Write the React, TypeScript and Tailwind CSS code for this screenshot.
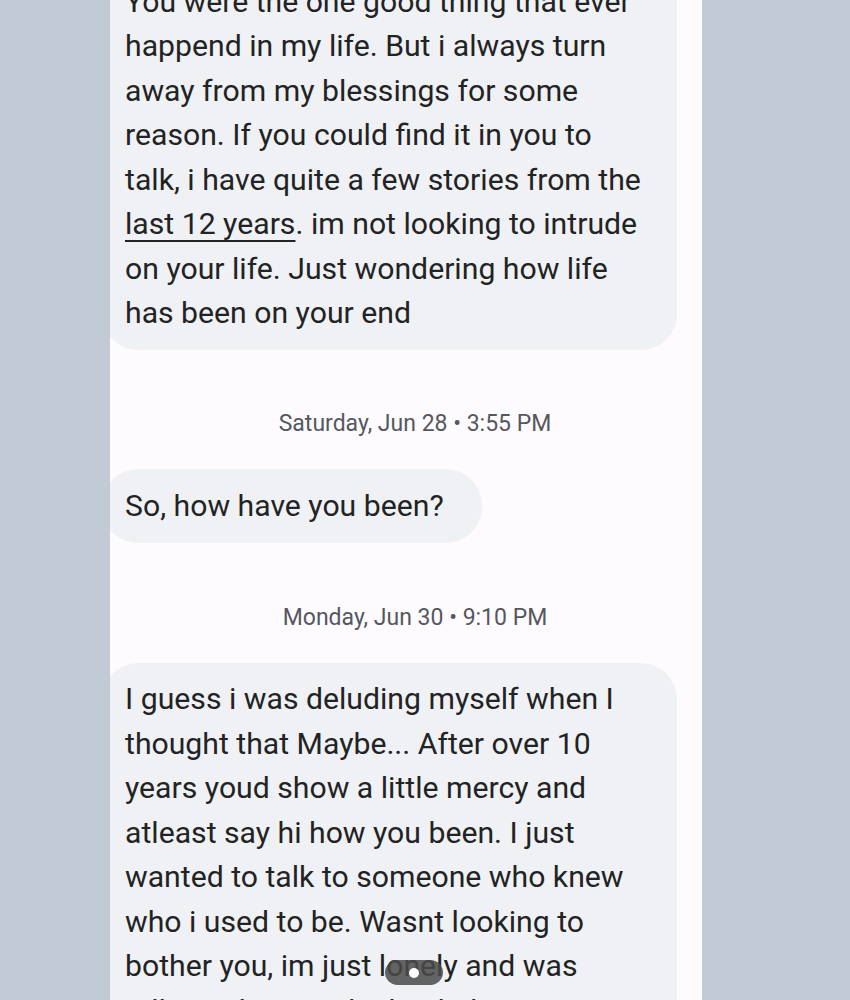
const firstBubble = [
  "You were the one good thing that ever",
  "happend in my life. But i always turn",
  "away from my blessings for some",
  "reason. If you could find it in you to",
  "talk, i have quite a few stories from the",
  null,
  "on your life. Just wondering how life",
  "has been on your end",
];

const lastBubble = [
  "I guess i was deluding myself when I",
  "thought that Maybe... After over 10",
  "years youd show a little mercy and",
  "atleast say hi how you been. I just",
  "wanted to talk to someone who knew",
  "who i used to be. Wasnt looking to",
  "bother you, im just lonely and was",
  "talking about in the back that I",
];

const Stamp = ({ children }: { children: string }) => (
  <div className="pl-[18px] text-center text-[23px] leading-[28px] text-[#55585e]">
    {children}
  </div>
);

export default function App() {
  return (
    <div
      className="min-h-screen bg-[#c2cad6]"
      style={{ fontFamily: "Roboto, 'Liberation Sans', sans-serif" }}
    >
      <div className="relative ml-[110px] h-[1000px] w-[592px] overflow-hidden bg-[#fdfbfe]">
        <div className="flex flex-col text-[30.2px] leading-[44.5px] text-[#222324]">
          {/* cut-off bubble at top */}
          <div className="-ml-[8px] -mt-[35px] mr-[25px] rounded-[36px] bg-[#f0f1f4] py-[14.5px] pl-[23px]">
            {firstBubble.map((line, i) =>
              line === null ? (
                <div key={i}>
                  <span className="underline decoration-[2px] underline-offset-[6px]">
                    last 12 years
                  </span>
                  . im not looking to intrude
                </div>
              ) : (
                <div key={i}>{line}</div>
              )
            )}
          </div>

          <div className="mb-[31px] mt-[60px]">
            <Stamp>Saturday, Jun 28 • 3:55 PM</Stamp>
          </div>

          <div className="-ml-[8px] w-fit rounded-[36px] bg-[#f0f1f4] py-[14.5px] pl-[23px] pr-[38px]">
            So, how have you been?
          </div>

          <div className="mb-[31px] mt-[61px]">
            <Stamp>Monday, Jun 30 • 9:10 PM</Stamp>
          </div>

          <div className="-ml-[8px] mr-[25px] rounded-[36px] bg-[#f0f1f4] py-[14.5px] pl-[23px]">
            {lastBubble.map((line, i) => (
              <div key={i}>{line}</div>
            ))}
          </div>
        </div>

        {/* gesture handle overlay */}
        <div className="absolute left-[275px] top-[960px] flex h-[25px] w-[58px] items-center justify-center rounded-full bg-[#4a4a4a]/85">
          <div className="h-[10px] w-[10px] rounded-full bg-white" />
        </div>
      </div>
    </div>
  );
}
